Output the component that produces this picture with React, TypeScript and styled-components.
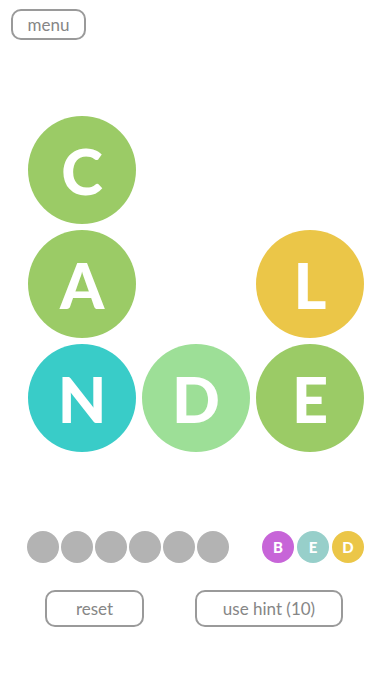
import React from "react";
import styled, { createGlobalStyle } from "styled-components";

const Global = createGlobalStyle`
  html, body { margin: 0; padding: 0; background: #ffffff; }
  body { font-family: "Lato", "Open Sans", sans-serif; }
`;

const Page = styled.div`
  width: 392px;
  height: 696px;
  display: flex;
  flex-direction: column;
  background: #fff;
`;

const TopBar = styled.div`
  padding: 9px 0 0 11px;
  height: 31px;
`;

const OutlineButton = styled.button<{ $w: number; $h: number }>`
  width: ${(p) => p.$w}px;
  height: ${(p) => p.$h}px;
  box-sizing: border-box;
  border: 2px solid #9a9a9a;
  border-radius: 10px;
  background: #fff;
  color: #868686;
  font-family: "Lato", "Open Sans", sans-serif;
  font-size: 17px;
  font-weight: 400;
  display: flex;
  align-items: center;
  justify-content: center;
  padding: 0;
`;

const Board = styled.div`
  margin: 76px 0 0 28px;
  display: grid;
  grid-template-columns: repeat(3, 108px);
  grid-template-rows: repeat(3, 108px);
  gap: 6px;
`;

const Tile = styled.div<{ $bg: string; $col: number; $row: number }>`
  grid-column: ${(p) => p.$col};
  grid-row: ${(p) => p.$row};
  width: 108px;
  height: 108px;
  border-radius: 50%;
  background: ${(p) => p.$bg};
  color: #fff;
  display: flex;
  align-items: center;
  justify-content: center;
  font-family: "Lato", sans-serif;
  font-weight: 900;
  font-size: 63px;
  line-height: 1;
`;

const Tray = styled.div`
  margin: 79px 0 0 27px;
  display: flex;
  align-items: center;
  width: 337px;
  justify-content: space-between;
`;

const Slots = styled.div`
  display: flex;
  gap: 2px;
`;

const Slot = styled.div`
  width: 32px;
  height: 32px;
  border-radius: 50%;
  background: #b3b3b3;
`;

const Letters = styled.div`
  display: flex;
  gap: 3px;
`;

const SmallTile = styled.div<{ $bg: string }>`
  width: 32px;
  height: 32px;
  border-radius: 50%;
  background: ${(p) => p.$bg};
  color: #fff;
  display: flex;
  align-items: center;
  justify-content: center;
  font-family: "Lato", sans-serif;
  font-weight: 900;
  font-size: 15px;
`;

const Actions = styled.div`
  margin: 27px 0 0 45px;
  display: flex;
  gap: 51px;
`;

const tiles = [
  { ch: "C", bg: "#9bcb66", col: 1, row: 1 },
  { ch: "A", bg: "#9bcb66", col: 1, row: 2 },
  { ch: "L", bg: "#ebc648", col: 3, row: 2 },
  { ch: "N", bg: "#39ccc8", col: 1, row: 3 },
  { ch: "D", bg: "#9ddf97", col: 2, row: 3 },
  { ch: "E", bg: "#9bcb66", col: 3, row: 3 },
];

const pool = [
  { ch: "B", bg: "#c765d8" },
  { ch: "E", bg: "#97cfca" },
  { ch: "D", bg: "#ebc648" },
];

export default function App() {
  return (
    <Page>
      <Global />
      <TopBar>
        <OutlineButton $w={75} $h={31}>menu</OutlineButton>
      </TopBar>
      <Board>
        {tiles.map((t, i) => (
          <Tile key={i} $bg={t.bg} $col={t.col} $row={t.row}>
            {t.ch}
          </Tile>
        ))}
      </Board>
      <Tray>
        <Slots>
          {Array.from({ length: 6 }).map((_, i) => (
            <Slot key={i} />
          ))}
        </Slots>
        <Letters>
          {pool.map((p, i) => (
            <SmallTile key={i} $bg={p.bg}>
              {p.ch}
            </SmallTile>
          ))}
        </Letters>
      </Tray>
      <Actions>
        <OutlineButton $w={99} $h={37}>reset</OutlineButton>
        <OutlineButton $w={148} $h={37}>use hint (10)</OutlineButton>
      </Actions>
    </Page>
  );
}
